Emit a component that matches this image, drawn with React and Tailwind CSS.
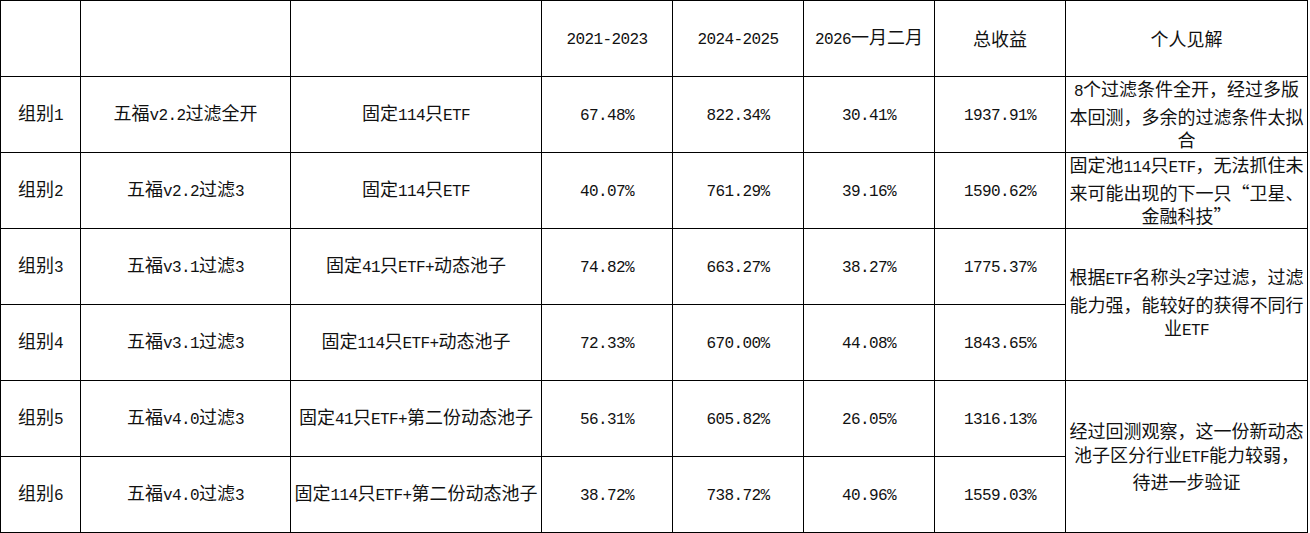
import React from "react";

const header = ["", "", "", "2021-2023", "2024-2025", "2026一月二月", "总收益", "个人见解"];

const rows = [
  { g: "组别1", v: "五福v2.2过滤全开", pool: "固定114只ETF", a: "67.48%", b: "822.34%", c: "30.41%", t: "1937.91%", note: "8个过滤条件全开，经过多版本回测，多余的过滤条件太拟合", span: 1 },
  { g: "组别2", v: "五福v2.2过滤3", pool: "固定114只ETF", a: "40.07%", b: "761.29%", c: "39.16%", t: "1590.62%", note: "固定池114只ETF，无法抓住未来可能出现的下一只“卫星、金融科技”", span: 1 },
  { g: "组别3", v: "五福v3.1过滤3", pool: "固定41只ETF+动态池子", a: "74.82%", b: "663.27%", c: "38.27%", t: "1775.37%", note: "根据ETF名称头2字过滤，过滤能力强，能较好的获得不同行业ETF", span: 2 },
  { g: "组别4", v: "五福v3.1过滤3", pool: "固定114只ETF+动态池子", a: "72.33%", b: "670.00%", c: "44.08%", t: "1843.65%" },
  { g: "组别5", v: "五福v4.0过滤3", pool: "固定41只ETF+第二份动态池子", a: "56.31%", b: "605.82%", c: "26.05%", t: "1316.13%", note: "经过回测观察，这一份新动态池子区分行业ETF能力较弱，待进一步验证", span: 2 },
  { g: "组别6", v: "五福v4.0过滤3", pool: "固定114只ETF+第二份动态池子", a: "38.72%", b: "738.72%", c: "40.96%", t: "1559.03%" },
];

// half-width latin runs get a narrow mono face, like the original sheet
function Txt({ text }) {
  return text.split(/([\x20-\x7e]+)/).filter(Boolean).map((s, i) =>
    /^[\x20-\x7e]+$/.test(s) ? (
      <span key={i} className="font-['Liberation_Mono'] text-[16px] tracking-[-0.6px]">
        {s}
      </span>
    ) : (
      <span key={i}>{s}</span>
    )
  );
}

function Cell({ text, className = "" }) {
  return (
    <div className={`bg-white flex items-center justify-center text-center ${className}`}>
      <div>
        <Txt text={text} />
      </div>
    </div>
  );
}

export default function App() {
  return (
    <div className="w-[1310px] h-[533px] bg-white font-['Noto_Sans_CJK_SC',sans-serif] text-[18px] leading-[23.5px] text-[#111]">
      <div className="inline-grid grid-cols-[79px_209px_250px_130px_130px_130px_130px_241px] grid-rows-[repeat(7,75px)] gap-px p-px bg-black">
        {header.map((h, i) => (
          <Cell key={i} text={h} />
        ))}
        {rows.map((r) => (
          <React.Fragment key={r.g}>
            <Cell text={r.g} />
            <Cell text={r.v} />
            <Cell text={r.pool} />
            <Cell text={r.a} />
            <Cell text={r.b} />
            <Cell text={r.c} />
            <Cell text={r.t} />
            {r.note && (
              <Cell
                text={r.note}
                className={`px-[3px] ${r.span === 2 ? "row-span-2" : ""}`}
              />
            )}
          </React.Fragment>
        ))}
      </div>
    </div>
  );
}
